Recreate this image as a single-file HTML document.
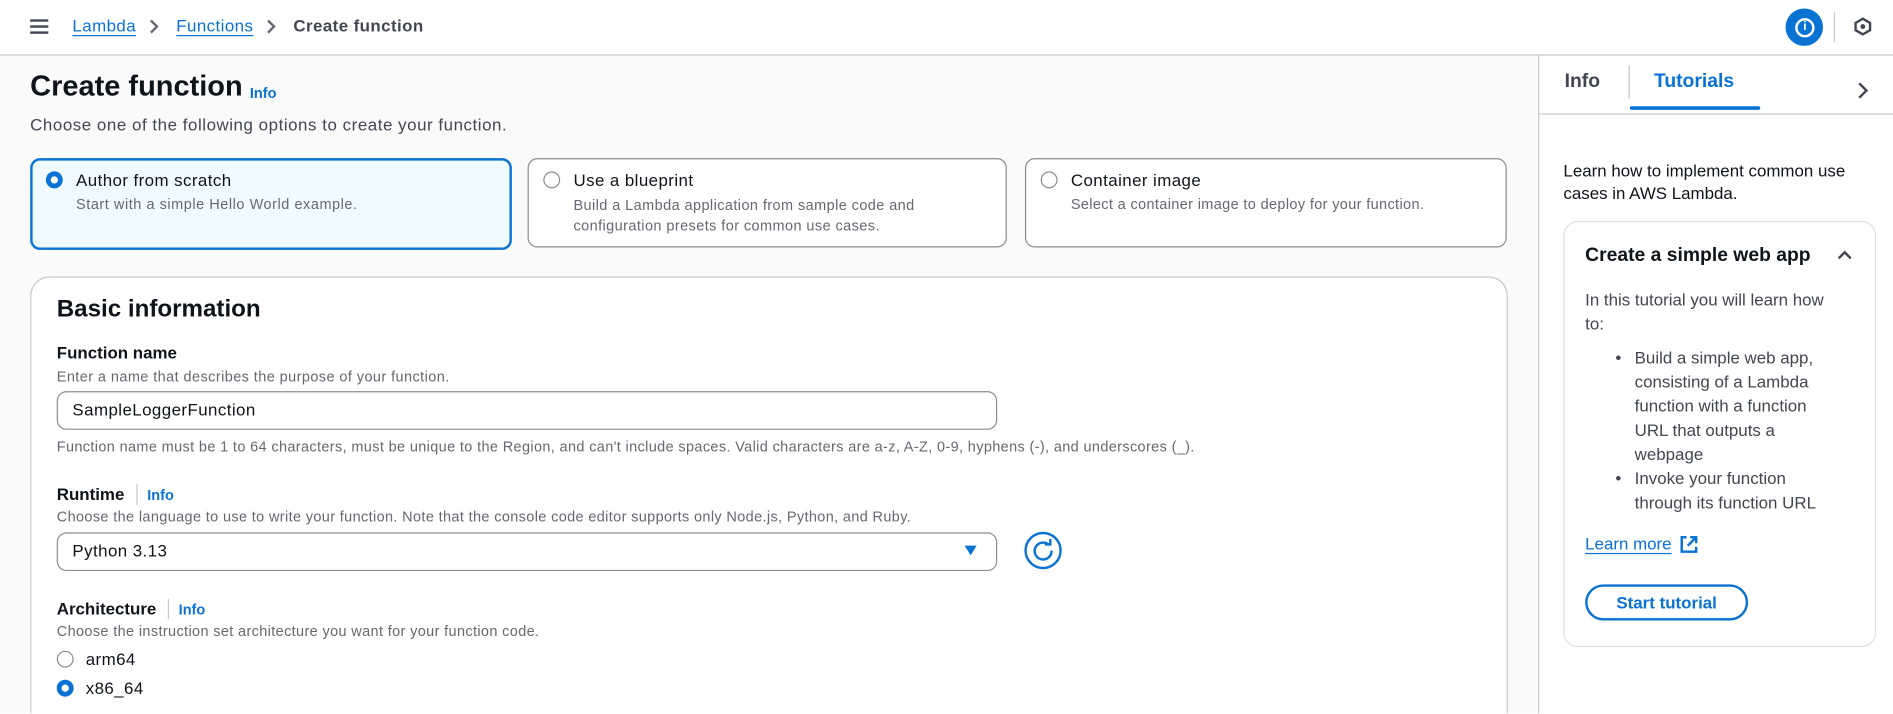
<!DOCTYPE html>
<html><head><meta charset="utf-8"><style>
html,body{margin:0;padding:0;width:1893px;height:713px;overflow:hidden;background:#fff}
#s{position:absolute;left:0;top:0;width:1568px;height:591px;overflow:hidden;transform:scale(1.20727);transform-origin:0 0;font-family:"Liberation Sans",sans-serif;color:#0f141a}
.a{position:absolute;white-space:nowrap}
.L{letter-spacing:.35px}
.link{color:#0972d3;text-decoration:underline;text-underline-offset:3px}
.lbl{font-weight:bold;font-size:14px}
.desc{font-size:12px;color:#656871}
.card{position:absolute;top:131px;height:74px;width:397px;border:1px solid #8c8c94;border-radius:8px;background:#fff;box-sizing:border-box}
.card.sel{border:2px solid #0972d3;background:#f0fbff}
.rad{position:absolute;width:14px;height:14px;border-radius:50%;border:1px solid #8c8c94;box-sizing:border-box;background:#fff}
.rad.on{border:4px solid #0972d3}
.inp{position:absolute;left:47px;width:779px;height:32px;border:1px solid #8c8c94;border-radius:8px;box-sizing:border-box;background:#fff}
.info{color:#0972d3;font-weight:bold;font-size:12px}
</style></head><body><div id="s">
<div class="a" style="left:0;top:0;width:1568px;height:45px;border-bottom:1px solid #c6c6cd;background:#fff"></div>
<div class="a" style="left:25px;top:16px;width:15px;height:2px;background:#424650;box-shadow:0 5px 0 #424650,0 10px 0 #424650"></div>
<div class="a link L" style="left:60px;top:13px;font-size:14px">Lambda</div>
<svg class="a" style="left:123px;top:15px" width="10" height="14"><path d="M2 2l5 5-5 5" fill="none" stroke="#656871" stroke-width="2"/></svg>
<div class="a link L" style="left:146px;top:13px;font-size:14px">Functions</div>
<svg class="a" style="left:220px;top:15px" width="10" height="14"><path d="M2 2l5 5-5 5" fill="none" stroke="#656871" stroke-width="2"/></svg>
<div class="a L" style="left:243px;top:13px;font-size:14px;font-weight:bold;color:#424650">Create function</div>
<div class="a" style="left:1479px;top:7px;width:31px;height:31px;border-radius:50%;background:#0972d3"></div>
<div class="a" style="left:1487px;top:15px;width:12px;height:12px;border:2px solid #fff;border-radius:50%;color:#fff;font-size:10px;font-weight:bold;text-align:center;line-height:12px">i</div>
<div class="a" style="left:1519px;top:10px;width:1px;height:25px;background:#c6c6cd"></div>
<svg class="a" style="left:1535px;top:14px" width="16" height="16" viewBox="0 0 16 16"><path d="M8 1.5L14 5v6l-6 3.5L2 11V5z" fill="none" stroke="#424650" stroke-width="2"/><circle cx="8" cy="8" r="2" fill="#424650"/></svg>
<div class="a" style="left:0;top:46px;width:1274px;height:545px;background:#fafafb;border-right:1px solid #c6c6cd"></div>
<div class="a" style="left:25px;top:58px;font-size:24px;font-weight:bold">Create function</div>
<div class="a info" style="left:207px;top:70px">Info</div>
<div class="a L" style="left:25px;top:95px;font-size:14px;color:#424650;letter-spacing:.45px">Choose one of the following options to create your function.</div>
<div class="card sel" style="left:25px;width:399px;height:76px"></div>
<div class="rad on" style="left:38px;top:142px"></div>
<div class="a L" style="left:63px;top:141px;font-size:14px">Author from scratch</div>
<div class="a desc" style="left:63px;top:162px;letter-spacing:.45px">Start with a simple Hello World example.</div>
<div class="card" style="left:437px"></div>
<div class="rad" style="left:450px;top:142px"></div>
<div class="a L" style="left:475px;top:141px;font-size:14px">Use a blueprint</div>
<div class="a desc" style="left:475px;top:162px;line-height:17px;letter-spacing:.35px">Build a Lambda application from sample code and<br>configuration presets for common use cases.</div>
<div class="card" style="left:849px;width:399px"></div>
<div class="rad" style="left:862px;top:142px"></div>
<div class="a L" style="left:887px;top:141px;font-size:14px">Container image</div>
<div class="a desc" style="left:887px;top:162px;letter-spacing:.3px">Select a container image to deploy for your function.</div>
<div class="a" style="left:25px;top:229px;width:1224px;height:362px;border:1px solid #c6c6cd;border-bottom:none;border-radius:16px 16px 0 0;background:#fff;box-sizing:border-box"></div>
<div class="a" style="left:47px;top:245px;font-size:20px;font-weight:bold">Basic information</div>
<div class="a lbl" style="left:47px;top:284px">Function name</div>
<div class="a desc" style="left:47px;top:305px;letter-spacing:.35px">Enter a name that describes the purpose of your function.</div>
<div class="inp" style="top:324px"></div>
<div class="a L" style="left:60px;top:331px;font-size:14px">SampleLoggerFunction</div>
<div class="a desc" style="left:47px;top:363px;letter-spacing:.3px">Function name must be 1 to 64 characters, must be unique to the Region, and can't include spaces. Valid characters are a-z, A-Z, 0-9, hyphens (-), and underscores (_).</div>
<div class="a lbl" style="left:47px;top:401px">Runtime</div>
<div class="a" style="left:113px;top:401px;width:1px;height:17px;background:#c6c6cd"></div>
<div class="a info" style="left:122px;top:403px">Info</div>
<div class="a desc" style="left:47px;top:421px;letter-spacing:.3px">Choose the language to use to write your function. Note that the console code editor supports only Node.js, Python, and Ruby.</div>
<div class="inp" style="top:441px"></div>
<div class="a L" style="left:60px;top:448px;font-size:14px">Python 3.13</div>
<svg class="a" style="left:798px;top:451px" width="12" height="10"><path d="M1 1h10L6 9z" fill="#0972d3"/></svg>
<svg class="a" style="left:848px;top:440px" width="32" height="32" viewBox="0 0 32 32"><circle cx="16" cy="16" r="14.5" fill="none" stroke="#0972d3" stroke-width="2"/><path d="M21 11.5A7 7 0 1 0 23 16" fill="none" stroke="#0972d3" stroke-width="2"/><path d="M17.5 11h4.5V6.5" fill="none" stroke="#0972d3" stroke-width="2"/></svg>
<div class="a lbl" style="left:47px;top:496px">Architecture</div>
<div class="a" style="left:139px;top:496px;width:1px;height:17px;background:#c6c6cd"></div>
<div class="a info" style="left:148px;top:498px">Info</div>
<div class="a desc" style="left:47px;top:516px;letter-spacing:.3px">Choose the instruction set architecture you want for your function code.</div>
<div class="rad" style="left:47px;top:539px"></div>
<div class="a L" style="left:71px;top:538px;font-size:14px">arm64</div>
<div class="rad on" style="left:47px;top:563px"></div>
<div class="a L" style="left:71px;top:562px;font-size:14px">x86_64</div>
<div class="a" style="left:1275px;top:94px;width:293px;height:1px;background:#c6c6cd"></div>
<div class="a" style="left:1296px;top:59px;font-size:16px;font-weight:bold;color:#424650">Info</div>
<div class="a" style="left:1349px;top:54px;width:1px;height:28px;background:#c6c6cd"></div>
<div class="a" style="left:1370px;top:59px;font-size:16px;font-weight:bold;color:#0972d3">Tutorials</div>
<div class="a" style="left:1350px;top:88px;width:108px;height:3px;border-radius:2px;background:#0972d3"></div>
<svg class="a" style="left:1537px;top:67px" width="12" height="16"><path d="M3 2l6 6-6 6" fill="none" stroke="#424650" stroke-width="2"/></svg>
<div class="a" style="left:1295px;top:132px;font-size:14px;line-height:19px;color:#0f141a">Learn how to implement common use<br>cases in AWS Lambda.</div>
<div class="a" style="left:1295px;top:183px;width:259px;height:353px;border:1px solid #dedee3;border-radius:12px;box-sizing:border-box"></div>
<div class="a" style="left:1313px;top:203px;font-size:16px;font-weight:bold">Create a simple web app</div>
<svg class="a" style="left:1521px;top:205px" width="14" height="12"><path d="M2 9l5-5 5 5" fill="none" stroke="#424650" stroke-width="2"/></svg>
<div class="a" style="left:1313px;top:238px;font-size:14px;line-height:20px;color:#424650">In this tutorial you will learn how<br>to:</div>
<div class="a" style="left:1338px;top:286px;font-size:14px;line-height:20px;color:#424650">•<br><br><br><br><br>•</div>
<div class="a" style="left:1354px;top:286px;font-size:14px;line-height:20px;color:#424650">Build a simple web app,<br>consisting of a Lambda<br>function with a function<br>URL that outputs a<br>webpage<br>Invoke your function<br>through its function URL</div>
<div class="a link" style="left:1313px;top:442px;font-size:14px">Learn more</div>
<svg class="a" style="left:1391px;top:443px" width="16" height="16" viewBox="0 0 16 16"><path d="M6 2H2v12h12v-4M9 2h5v5M14 2L7 9" fill="none" stroke="#0972d3" stroke-width="2"/></svg>
<div class="a" style="left:1313px;top:484px;width:135px;height:30px;border:2px solid #0972d3;border-radius:16px;box-sizing:border-box;color:#0972d3;font-weight:bold;font-size:14px;text-align:center;line-height:26px">Start tutorial</div>
</div></body></html>
